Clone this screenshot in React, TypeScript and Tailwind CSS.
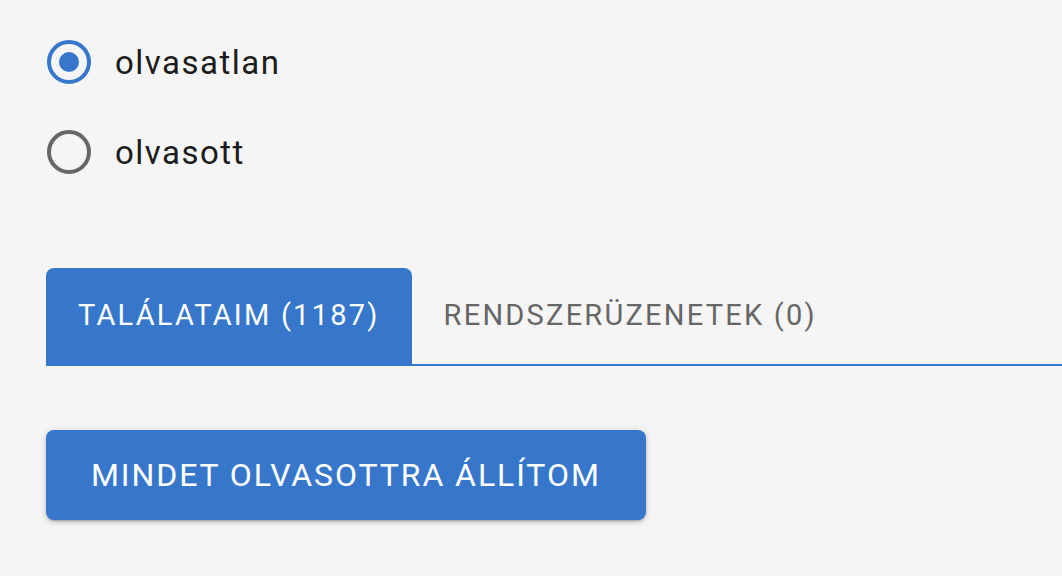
import { useState } from 'react';

const options = ['olvasatlan', 'olvasott'];

function Radio({ checked }: { checked: boolean }) {
  return (
    <span
      className={
        'flex h-[44px] w-[44px] shrink-0 items-center justify-center rounded-full border-[4px] ' +
        (checked ? 'border-[#3777cb]' : 'border-[#666666]')
      }
    >
      {checked && <span className="h-[20px] w-[20px] rounded-full bg-[#3777cb]" />}
    </span>
  );
}

export default function App() {
  const [selected, setSelected] = useState('olvasatlan');
  const [tab, setTab] = useState(0);

  const tabs = ['TALÁLATAIM (1187)', 'RENDSZERÜZENETEK (0)'];

  return (
    <div className="min-h-[576px] w-full bg-[#f5f5f5] pl-[46px] pt-[17px] font-['Roboto',sans-serif]">
      {/* Read filter */}
      <div className="flex flex-col">
        {options.map(opt => (
          <label
            key={opt}
            className="flex h-[90px] cursor-pointer items-center gap-[24px] pl-[1px]"
            onClick={() => setSelected(opt)}
          >
            <Radio checked={selected === opt} />
            <span className="text-[33px] leading-none tracking-[0.045em] text-[#1c1c1c]">{opt}</span>
          </label>
        ))}
      </div>

      {/* Tabs */}
      <div className="mt-[71px] flex border-b-2 border-[#3777cb]">
        {tabs.map((t, i) => (
          <button
            key={t}
            onClick={() => setTab(i)}
            className={
              'flex h-[96px] items-center px-[32px] text-[29px] tracking-[0.077em] ' +
              (tab === i ? 'rounded-t-[8px] bg-[#3777cb] text-white' : 'text-[#666666]')
            }
          >
            {t}
          </button>
        ))}
      </div>

      {/* Mark all read */}
      <button className="mt-[64px] flex h-[90px] items-center rounded-[8px] bg-[#3777cb] px-[45px] text-[32px] tracking-[0.06em] text-white shadow-[0_3px_2px_-2px_rgba(0,0,0,0.2),0_2px_4px_0_rgba(0,0,0,0.14),0_1px_8px_0_rgba(0,0,0,0.12)]">
        MINDET OLVASOTTRA ÁLLÍTOM
      </button>
    </div>
  );
}
